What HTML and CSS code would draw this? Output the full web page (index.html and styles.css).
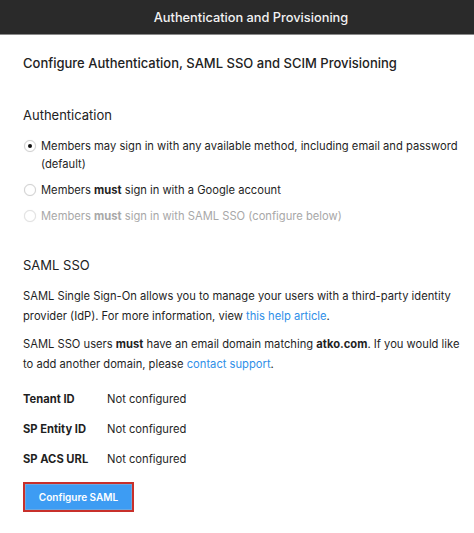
FILE: index.html
```html
<!DOCTYPE html>
<html>
<head>
<meta charset="utf-8">
<link rel="stylesheet" href="styles.css">
</head>
<body>
<div class="panel">
  <div class="header">Authentication and Provisioning</div>
  <div class="content">
    <h1 class="title">Configure Authentication, SAML SSO and SCIM Provisioning</h1>

    <h2 class="section">Authentication</h2>
    <div class="options">
      <div class="option">
        <span class="radio checked"></span>
        <span class="label">Members may sign in with any available method, including email and password (default)</span>
      </div>
      <div class="option">
        <span class="radio"></span>
        <span class="label">Members <b>must</b> sign in with a Google account</span>
      </div>
      <div class="option disabled">
        <span class="radio"></span>
        <span class="label">Members <b>must</b> sign in with SAML SSO (configure below)</span>
      </div>
    </div>

    <h2 class="section saml">SAML SSO</h2>
    <p class="para">SAML Single Sign-On allows you to manage your users with a third-party identity provider (IdP). For more information, view <a class="link">this help article</a>.</p>
    <p class="para">SAML SSO users <b>must</b> have an email domain matching <b>atko.com</b>. If you would like to add another domain, please <a class="link">contact support</a>.</p>

    <div class="fields">
      <div class="field"><span class="key">Tenant ID</span><span class="val">Not configured</span></div>
      <div class="field"><span class="key">SP Entity ID</span><span class="val">Not configured</span></div>
      <div class="field"><span class="key">SP ACS URL</span><span class="val">Not configured</span></div>
    </div>

    <div class="btnwrap"><button class="btn">Configure SAML</button></div>
  </div>
</div>
</body>
</html>
```
FILE: styles.css
```css
html, body {
  margin: 0;
  padding: 0;
  background: #fff;
}
body {
  font-family: Inter, "Noto Sans", sans-serif;
  color: #1f1f1f;
  width: 474px;
  height: 533px;
  overflow: hidden;
}
.panel {
  display: flex;
  flex-direction: column;
}
.header {
  height: 34px;
  background: #2a2a2a;
  border-bottom: 1px solid #8a8a8a;
  color: #f2f2f2;
  font-size: 12.8px;
  font-weight: 500;
  display: flex;
  align-items: center;
  justify-content: center;
  padding-left: 28px;
}
.content {
  padding: 0 10px 0 23px;
}
.title {
  margin: 19px 0 0 0;
  font-size: 13px;
  font-weight: 500;
  line-height: 18px;
  color: #222;
}
.section {
  margin: 34px 0 0 0;
  font-size: 13px;
  font-weight: 400;
  line-height: 18px;
  color: #222;
}
.section.saml {
  margin-top: 31px;
}
.options {
  margin-top: 13px;
  display: flex;
  flex-direction: column;
  gap: 8px;
}
.option {
  display: flex;
  align-items: flex-start;
  gap: 5px;
  font-size: 11.2px;
  line-height: 18px;
}
.radio {
  flex: none;
  box-sizing: border-box;
  width: 12px;
  height: 12px;
  border: 1px solid #d2d2d2;
  border-radius: 50%;
  margin-top: 3px;
  margin-left: 1px;
  box-shadow: 0 0 1px #e0e0e0;
  display: flex;
  align-items: center;
  justify-content: center;
  background: #fff;
}
.radio.checked::after {
  content: "";
  width: 4px;
  height: 4px;
  background: #111;
  border-radius: 50%;
}
.option.disabled {
  color: #a8a8a8;
}
.option.disabled .radio {
  border-color: #e2e2e2;
}
.para {
  margin: 12px 0 0 0;
  font-size: 11.2px;
  line-height: 20px;
}
.para + .para {
  margin-top: 8px;
}
.link {
  color: #2f8fe8;
}
.fields {
  margin-top: 16px;
  display: flex;
  flex-direction: column;
  gap: 12px;
}
.field {
  display: flex;
  font-size: 11.2px;
  line-height: 18px;
}
.key {
  width: 84px;
  font-weight: 700;
}
.btnwrap {
  margin-top: 14px;
  display: flex;
}
.btn {
  font-family: Inter, "Noto Sans", sans-serif;
  background: #3d9cf3;
  color: #fff;
  font-size: 10px;
  font-weight: 600;
  border: 2px solid #c8302b;
  box-shadow: inset 0 0 0 1px #6aa8e0;
  width: 111px;
  height: 30px;
  padding: 0;
}
```
